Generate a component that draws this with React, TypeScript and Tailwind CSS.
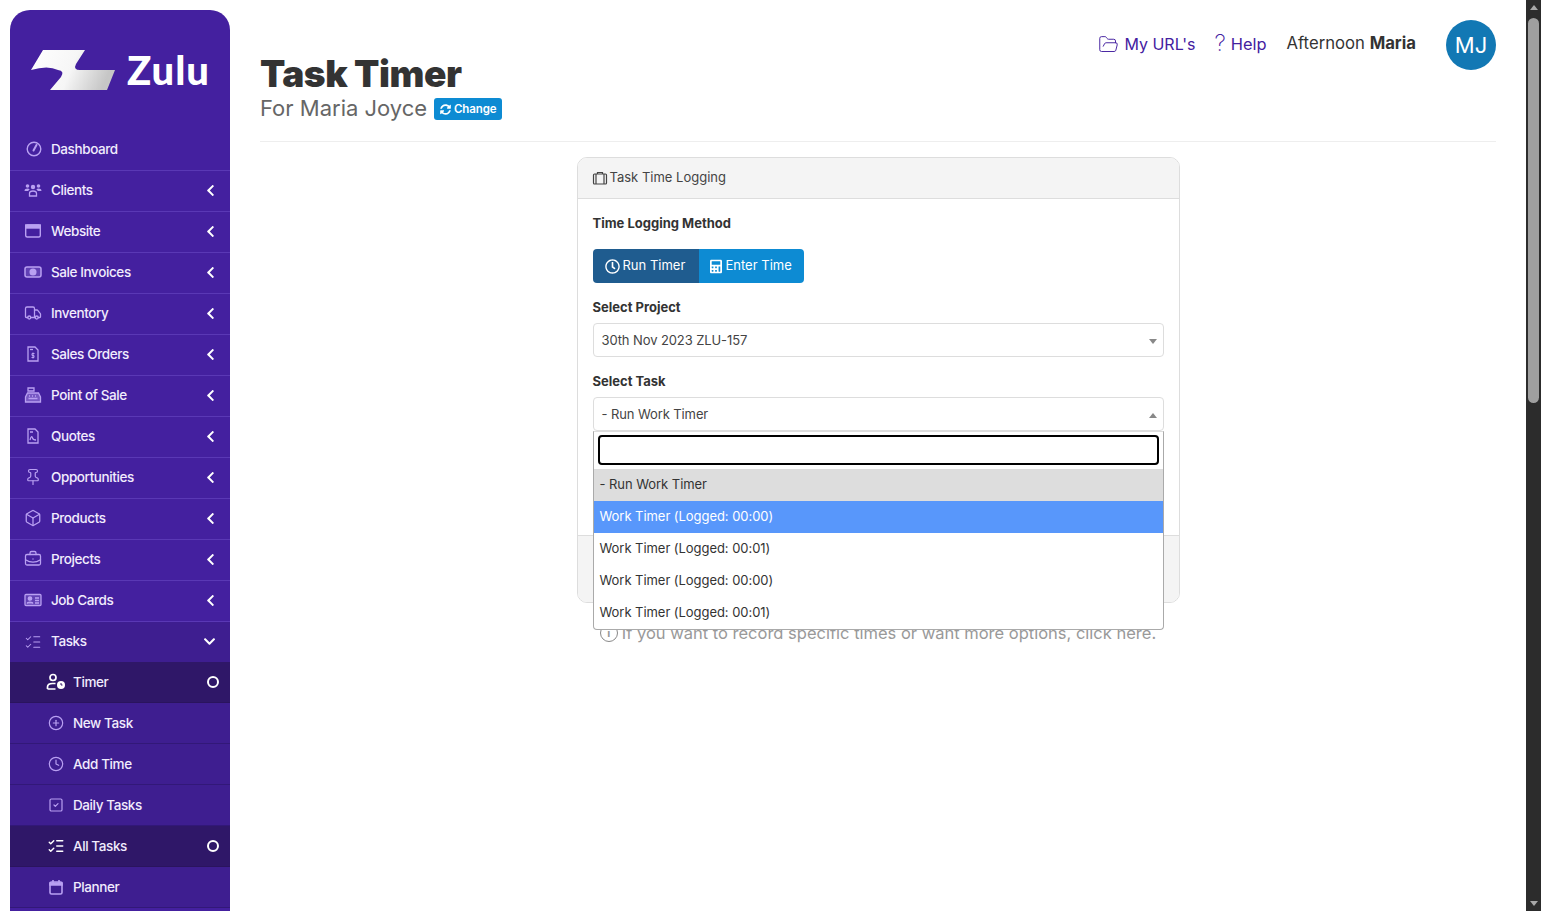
import React from "react";
import { Box, BriefcaseBusiness, ListChecks, CirclePlus, Clock, SquareCheck, FolderOpen, Truck, Pin } from "lucide-react";
import { FaChevronLeft, FaChevronDown, FaSyncAlt, FaCalculator, FaRegClock } from "react-icons/fa";

const ic = "w-[18px] h-[18px] text-[#b9a0f2]";

const DashIcon = () => (
  <svg viewBox="0 0 18 18" className={ic} fill="none" stroke="currentColor" strokeWidth="1.4"><circle cx="9" cy="9" r="6.800" /><path d="M11.500 5 8.500 10.500" strokeWidth="2" strokeLinecap="round" /></svg>
);
const ClientsIcon = () => (
  <svg viewBox="0 0 18 18" className={ic} fill="currentColor"><circle cx="3.500" cy="5" r="1.800" /><circle cx="14.500" cy="5" r="1.800" /><circle cx="9" cy="6" r="2.200" /><path d="M0.500 10c0-1.800 1.300-2.500 3-2.500 1 0 1.800.3 2.300.8-.8.500-1.300 1-1.500 1.700zM17.500 10c0-1.800-1.300-2.500-3-2.500-1 0-1.800.3-2.300.8.800.500 1.300 1 1.500 1.700z" /><path d="M5.500 15v-2.500c0-1.500 1.500-2.500 3.500-2.500s3.500 1 3.500 2.500V15z" fill="none" stroke="currentColor" strokeWidth="1.300" /></svg>
);
const WebIcon = () => (
  <svg viewBox="0 0 18 18" className={ic} fill="none" stroke="currentColor" strokeWidth="1.400"><rect x="1.700" y="3" width="14.600" height="12" rx="1.500" /><rect x="1.700" y="3" width="14.600" height="3" fill="currentColor" /></svg>
);
const MoneyIcon = () => (
  <svg viewBox="0 0 18 18" className={ic} fill="none" stroke="currentColor" strokeWidth="1.500"><rect x="1" y="4" width="16" height="10" rx="2" fill="currentColor" fillOpacity=".25" /><circle cx="9" cy="9" r="2.800" fill="currentColor" /></svg>
);
const ReceiptIcon = () => (
  <svg viewBox="0 0 18 18" className={ic} fill="none" stroke="currentColor" strokeWidth="1.300"><path d="M4 2h7l3 3v11H4z" /><path d="M6 4.500h3" /><path d="M10.500 8.500H8v2h2v2H7.500M9 7.500v6" strokeWidth="1" /></svg>
);
const RegisterIcon = () => (
  <svg viewBox="0 0 18 18" className={ic} fill="none" stroke="currentColor" strokeWidth="1.300"><path d="M4 2h6v3H4z" /><path d="M3.500 7h11l2 4v5h-15v-5z" fill="currentColor" fillOpacity=".45" /><path d="M5 10h1M8 10h1M11 10h1M4.500 12.500h9" /></svg>
);
const QuoteIcon = () => (
  <svg viewBox="0 0 18 18" className={ic} fill="none" stroke="currentColor" strokeWidth="1.300"><path d="M4 2h7l3 3v11H4z" /><path d="M6 5h3M6 13c1-4 2-4 2.500-2s1.500 2 3.500 2" /></svg>
);
const CardIcon = () => (
  <svg viewBox="0 0 18 18" className={ic} fill="none" stroke="currentColor" strokeWidth="1.300"><rect x="1" y="3.500" width="16" height="11" rx="1" fill="currentColor" fillOpacity=".25" /><circle cx="6" cy="7.500" r="1.700" fill="currentColor" /><path d="M3 12.500c.4-1.800 5.600-1.800 6 0" fill="currentColor" /><path d="M11 7h4M11 9.500h4M11 12h4" /></svg>
);
const TimerUser = () => (
  <svg viewBox="0 0 20 18" className="w-5 h-[18px] text-white" fill="none" stroke="currentColor" strokeWidth="1.700"><circle cx="7" cy="4.500" r="3" /><path d="M1.500 16v-2c0-2 2-3.500 5-3.500h3M1.500 16h8" /><circle cx="15" cy="12" r="4" fill="currentColor" stroke="none" /><path d="M15 10v2h1.500" stroke="#2e1766" strokeWidth="1" /></svg>
);
const CaseIcon = () => (
  <svg viewBox="0 0 16 16" className="w-[16px] h-[16px]" fill="none" stroke="currentColor" strokeWidth="1.200"><rect x="1.500" y="4" width="13" height="10" rx="1" /><path d="M5.500 4V2.500h5V4M4 4v10M12 4v10" /></svg>
);

type Item = { label: string; icon: React.ReactNode };
const top: Item[] = [
  { label: "Clients", icon: <ClientsIcon /> },
  { label: "Website", icon: <WebIcon /> },
  { label: "Sale Invoices", icon: <MoneyIcon /> },
  { label: "Inventory", icon: <Truck className={ic} strokeWidth={1.7} /> },
  { label: "Sales Orders", icon: <ReceiptIcon /> },
  { label: "Point of Sale", icon: <RegisterIcon /> },
  { label: "Quotes", icon: <QuoteIcon /> },
  { label: "Opportunities", icon: <Pin className={ic} strokeWidth={1.6} /> },
  { label: "Products", icon: <Box className={ic} strokeWidth={1.7} /> },
  { label: "Projects", icon: <BriefcaseBusiness className={ic} strokeWidth={1.7} /> },
  { label: "Job Cards", icon: <CardIcon /> },
];
const subIc = "w-4 h-4 text-[#b9a0f2]";
const subs: { label: string; icon: React.ReactNode; active?: boolean }[] = [
  { label: "Timer", icon: <TimerUser />, active: true },
  { label: "New Task", icon: <CirclePlus className={subIc} strokeWidth={1.8} /> },
  { label: "Add Time", icon: <Clock className={subIc} strokeWidth={1.8} /> },
  { label: "Daily Tasks", icon: <SquareCheck className={subIc} strokeWidth={1.8} /> },
  { label: "All Tasks", icon: <ListChecks className="w-[18px] h-[18px] text-white" strokeWidth={1.9} />, active: true },
  { label: "Planner", icon: <svg viewBox="0 0 16 16" className={subIc} fill="none" stroke="currentColor" strokeWidth="1.600"><rect x="2" y="3" width="12" height="12" rx="1.500" /><path d="M2 4h12v2H2z" fill="currentColor" /><path d="M5 1v3M11 1v3" /></svg> },
];

function Sidebar() {
  return (
    <aside className="ml-[10px] mt-[10px] w-[220px] shrink-0 rounded-t-[20px] bg-[#44209f] flex flex-col h-[901px] overflow-hidden">
      <div className="h-[120px] shrink-0 flex items-center pl-[20px] gap-[10px]">
        <svg viewBox="0 0 87 41" className="w-[87px] h-[41px] shrink-0">
          <defs>
            <linearGradient id="zg" x1="0" x2="1" y1="0" y2="0.2">
              <stop offset="0" stopColor="#ffffff" />
              <stop offset="0.55" stopColor="#f6f6f6" />
              <stop offset="1" stopColor="#c6c6c6" />
            </linearGradient>
          </defs>
          <path d="M1 20 13 0H55L46 14Q43 20 50 20H85L77 40H20L31 27Q35 21 28 20Q18 15 1 20Z" fill="url(#zg)" />
        </svg>
        <span className="text-white text-[40px] leading-none font-black tracking-[1px]" style={{ fontFamily: "Lato, sans-serif" }}>Zulu</span>
      </div>
      <nav className="flex flex-col text-[13.5px] text-[#f1ecfd] font-medium tracking-[-0.4px]">
        <div className="h-[41px] flex items-center pl-[15px] pb-[2px] gap-[8px] border-b border-[#5a38b5]">
          <span className="w-[18px] flex justify-center"><DashIcon /></span>Dashboard
        </div>
        {top.map((t) => (
          <div key={t.label} className="h-[41px] flex items-center pl-[14px] pr-[13px] pb-[2px] gap-[9px] border-b border-[#5a38b5]">
            <span className="w-[18px] flex justify-center">{t.icon}</span>
            <span className="flex-1">{t.label}</span>
            <FaChevronLeft className="w-[13px] h-[13px] text-white" />
          </div>
        ))}
        <div className="h-[40px] flex items-center pl-[14px] pr-[14px] pb-[1px] gap-[9px] bg-[#3e1e90]">
          <span className="w-[18px] flex justify-center"><ListChecks className={ic} strokeWidth={1.4} /></span>
          <span className="flex-1">Tasks</span>
          <FaChevronDown className="w-[13px] h-[13px] text-white" />
        </div>
        {subs.map((s) => (
          <div key={s.label} className={`h-[41px] flex items-center pl-[36px] pr-[11px] gap-[7px] border-b ${s.active ? "bg-[#2f1768] border-[#2a145e]" : "bg-[#3e1e90] border-[#321878]"}`}>
            <span className="w-[20px] flex justify-center">{s.icon}</span>
            <span className="flex-1">{s.label}</span>
            {s.active && <span className="w-[12px] h-[12px] rounded-full border-2 border-white" />}
          </div>
        ))}
      </nav>
    </aside>
  );
}

function Label({ children }: { children: React.ReactNode }) {
  return <div className="text-[13px] font-bold text-[#333] leading-[20px]">{children}</div>;
}

function SelectBox({ text, up }: { text: string; up?: boolean }) {
  return (
    <div className="h-[34px] border border-[#ddd] rounded-[4px] flex items-center px-[8px] pt-[1px] text-[13px] tracking-[-0.1px] text-[#444] relative">
      {text}
      <span className={`absolute right-[6px] top-[15px] w-0 h-0 border-x-[4px] border-x-transparent ${up ? "border-b-[5px] border-b-[#888]" : "border-t-[5px] border-t-[#888]"}`} />
    </div>
  );
}

function Main() {
  return (
    <main className="flex-1 min-w-0 px-[30px] text-[#333]">
      <header className="h-[142px] border-b border-[#eee] flex justify-between">
        <div className="pt-[52px]">
          <h1 className="text-[37px] leading-[44px] font-black text-[#333] tracking-[-0.45px]">Task Timer</h1>
          <div className="flex items-center gap-[7px] -mt-[1px]">
            <span className="text-[22px] leading-[24px] text-[#666]">For Maria Joyce</span>
            <span className="bg-[#0d8bd3] text-white rounded-[3px] text-[11.5px] font-semibold h-[22px] w-[68px] justify-center flex items-center gap-[3px] mt-[3px] pt-[1px] tracking-[-0.1px]"><FaSyncAlt className="w-[11px] h-[11px]" />Change</span>
          </div>
        </div>
        <div className="flex items-start pt-[20px]">
          <div className="flex items-center h-[50px] pb-[2px]">
            <span className="flex items-center gap-[5px] text-[#44209f] text-[16px]"><FolderOpen className="w-[21px] h-[21px]" strokeWidth={1.1} />My URL's</span>
            <span className="flex items-center gap-[5px] text-[#44209f] ml-[19px] text-[16.4px]"><span className="text-[23px] font-extralight leading-none">?</span>Help</span>
            <span className="ml-[20px] text-[#333] text-[16.7px]">Afternoon <b className="font-bold">Maria</b></span>
          </div>
          <div className="ml-[30px] w-[50px] h-[50px] rounded-full bg-[#1278b4] text-white text-[22px] flex items-center justify-center">MJ</div>
        </div>
      </header>

      <div className="w-[603px] mx-auto mt-[15px] relative">
        <section className="border border-[#ddd] rounded-[10px] overflow-hidden h-[446px] flex flex-col">
          <div className="h-[41px] bg-[#f4f4f4] border-b border-[#ddd] flex items-center pl-[14px] pb-[1px] gap-[2px] text-[13px] text-[#444]">
            <CaseIcon />Task Time Logging
          </div>
          <div className="flex-1 px-[15px] pt-[14px]">
            <Label>Time Logging Method</Label>
            <div className="flex mt-[16px] w-fit rounded-[4px] overflow-hidden text-white text-[13px] h-[34px]">
              <span className="bg-[#1f5c8f] w-[106px] flex items-center gap-[3px] pl-[12px]"><FaRegClock className="w-[15px] h-[15px]" />Run Timer</span>
              <span className="bg-[#0d8bd3] w-[105px] flex items-center gap-[4px] pl-[11px]"><FaCalculator className="w-[12px] h-[15px]" />Enter Time</span>
            </div>
            <div className="mt-[14px]"><Label>Select Project</Label></div>
            <div className="mt-[6px]"><SelectBox text="30th Nov 2023 ZLU-157" /></div>
            <div className="mt-[14px]"><Label>Select Task</Label></div>
            <div className="mt-[6px]"><SelectBox text="- Run Work Timer" up /></div>
          </div>
          <div className="h-[67px] bg-[#f4f4f4] border-t border-[#ddd]" />
        </section>

        <div className="absolute left-[16px] top-[274px] w-[571px] h-[199px] bg-white border border-[#aaa] border-t-[#ddd] rounded-b-[4px] text-[13px] tracking-[-0.05px] text-[#333] z-10">
          <div className="h-[37px] px-[4px] pt-[3px]">
            <div className="h-[30px] border-2 border-black rounded-[4px]" />
          </div>
          <div className="h-[32px] bg-[#ddd] flex items-center px-[6px]">- Run Work Timer</div>
          <div className="h-[32px] bg-[#5897fb] text-white flex items-center px-[6px]">Work Timer (Logged: 00:00)</div>
          <div className="h-[32px] flex items-center px-[6px]">Work Timer (Logged: 00:01)</div>
          <div className="h-[32px] flex items-center px-[6px]">Work Timer (Logged: 00:00)</div>
          <div className="h-[32px] flex items-center px-[6px]">Work Timer (Logged: 00:01)</div>
        </div>

        <div className="flex items-center justify-center gap-[4px] mt-[20px] h-[20px] text-[16.5px] text-[#999]">
          <span className="w-[18px] h-[18px] rounded-full border-[1.5px] border-[#888] text-[11px] flex items-center justify-center font-bold">i</span>
          If you want to record specific times or want more options, click here.
        </div>
      </div>
    </main>
  );
}

function Scrollbar() {
  return (
    <div className="w-[15px] shrink-0 bg-[#2c2c2c] flex flex-col items-center h-[911px]">
      <span className="mt-[5px] w-0 h-0 border-x-[4px] border-x-transparent border-b-[5px] border-b-[#a8a8a8]" />
      <div className="mt-[8px] w-[11px] h-[385px] bg-[#9f9f9f] rounded-[6px]" />
      <div className="flex-1" />
      <span className="mb-[5px] w-0 h-0 border-x-[4px] border-x-transparent border-t-[5px] border-t-[#a8a8a8]" />
    </div>
  );
}

export default function App() {
  return (
    <div className="flex h-[911px] overflow-hidden bg-white" style={{ fontFamily: "Inter, 'Liberation Sans', sans-serif" }}>
      <Sidebar />
      <Main />
      <Scrollbar />
    </div>
  );
}
